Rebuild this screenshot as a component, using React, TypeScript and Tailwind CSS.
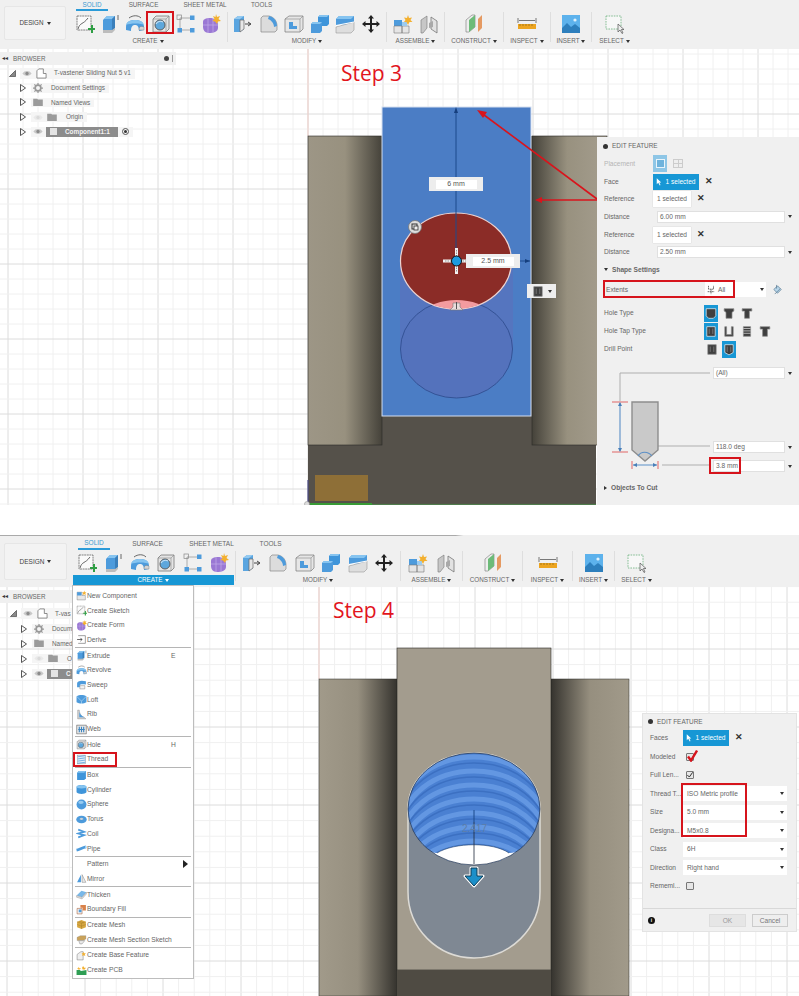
import React from 'react';
import clsx from 'clsx';

const FONT = 'font-["Liberation_Sans",Arial,sans-serif]';

const Svg = ({ children, className = 'h-5 w-5' }: { children: React.ReactNode; className?: string }) => (
  <svg viewBox="0 0 20 20" className={clsx('shrink-0', className)}>
    {children}
  </svg>
);

type IconProps = { className?: string };

const SketchIcon = ({ className }: IconProps) => (
  <Svg className={className}>
    <rect x="2" y="2" width="14" height="14" fill="#fafafa" stroke="#666" strokeWidth="0.8" strokeDasharray="2 .6" />
    <path d="M3 15 C5 8 8 11 13 4" fill="none" stroke="#555" strokeWidth="0.9" />
    <path d="M13 14 h3 v-3 h2 v3 h2 v2 h-2 v3 h-2 v-3 h-3z" fill="#2f9e44" />
  </Svg>
);
const ExtrudeIcon = ({ className }: IconProps) => (
  <Svg className={className}>
    <path d="M3 6 L7 2 H15 V14 L12 17 H3Z" fill="#4d9bdc" />
    <path d="M3 6 L7 2 H15 L12 5 H3Z" fill="#86c4f0" />
    <path d="M12 5 L15 2 V14 L12 17Z" fill="#3a7fbb" />
    <path d="M3 16 H12 L15 14 V16 L12 19 H3Z" fill="#bdbdbd" />
    <path d="M18 1 V6" stroke="#444" strokeWidth="0.8" />
  </Svg>
);
const RevolveIcon = ({ className }: IconProps) => (
  <Svg className={className}>
    <path d="M1 13 C1 7 6 6 10 6 C14 6 19 7 19 13 L19 16 L14 17 C14 12 12 11 10 11 C8 11 6 12 6 17 L1 16Z" fill="#4d9bdc" />
    <path d="M1 11 C2 7 6 6 10 6 C14 6 18 7 19 11 C16 9 5 9 1 11Z" fill="#86c4f0" />
    <path d="M4 4 C8 1 13 1 16 4" fill="none" stroke="#444" strokeWidth="0.8" />
    <path d="M14 16 C14 12 16 12 19 13 V16Z" fill="#d5d5d5" stroke="#777" strokeWidth="0.4" />
  </Svg>
);
const HoleIcon = ({ className }: IconProps) => (
  <Svg className={className}>
    <path d="M2 5 L5 2 H18 V15 L15 18 H2Z" fill="#e4e4e4" stroke="#777" strokeWidth="0.8" />
    <path d="M2 5 H15 V18 M15 5 L18 2" fill="none" stroke="#888" strokeWidth="0.6" />
    <circle cx="9" cy="11" r="5" fill="#5ea7dc" stroke="#555" strokeWidth="0.9" />
    <path d="M5 10 A5 5 0 0 1 12 8" fill="none" stroke="#c6e0f4" strokeWidth="1.1" />
  </Svg>
);
const PatternIcon = ({ className }: IconProps) => (
  <Svg className={className}>
    <path d="M4 4 H16 M4 4 V16 M4 16 H16" fill="none" stroke="#999" strokeWidth="0.8" />
    <rect x="1" y="1" width="4.5" height="4.5" fill="none" stroke="#888" strokeWidth="0.7" />
    <rect x="14" y="1.5" width="4.5" height="4.5" fill="#4d9bdc" />
    <rect x="1.5" y="14" width="4.5" height="4.5" fill="#4d9bdc" />
    <rect x="14" y="14" width="4.5" height="4.5" fill="#4d9bdc" />
  </Svg>
);
const FormIcon = ({ className }: IconProps) => (
  <Svg className={className}>
    <path d="M2 8 C2 5 5 4 9 4 C13 4 16 6 17 10 V14 C17 18 12 19 8 19 C4 19 2 16 2 13Z" fill="#9a78d4" />
    <path d="M7 4 V19 M2 11 H17 M12 5 V18" stroke="#c3aeea" strokeWidth="0.7" fill="none" />
    <path d="M15 0 L16 3 L19 2 L17.5 5 L20 7 L17 7.5 L16 10 L14 7.5 L11.5 7 L13.5 5 L12 2 L14.5 3Z" fill="#f3b02f" />
  </Svg>
);
const PressPullIcon = ({ className }: IconProps) => (
  <Svg className={className}>
    <path d="M1 5 L5 2 H11 V15 L7 18 H1Z" fill="#5aa5e0" />
    <path d="M7 6 H11 V15 L7 18Z" fill="#e7e7e7" stroke="#666" strokeWidth="0.7" />
    <path d="M1 5 L5 2 H11 L7 5Z" fill="#93c9f0" />
    <path d="M12 10 H17 M15 8 L18 10 L15 12" fill="none" stroke="#333" strokeWidth="0.9" />
  </Svg>
);
const FilletIcon = ({ className }: IconProps) => (
  <Svg className={className}>
    <path d="M2 4 L4 2 H10 C15 3 18 7 18 12 V16 L16 18 H2Z" fill="#dcdcdc" stroke="#888" strokeWidth="0.7" />
    <path d="M10 2 C15 3 18 7 18 12 L15 13 C15 9 12 6 9 5Z" fill="#4d9bdc" />
  </Svg>
);
const ShellIcon = ({ className }: IconProps) => (
  <Svg className={className}>
    <path d="M1 5 L5 2 H19 V15 L16 18 H1Z" fill="#e6e6e6" stroke="#777" strokeWidth="0.7" />
    <path d="M1 5 H16 V18 M16 5 L19 2" fill="none" stroke="#888" strokeWidth="0.6" />
    <path d="M5 8 H9 V12 H13 V15 H5Z" fill="#4d9bdc" />
  </Svg>
);
const CombineIcon = ({ className }: IconProps) => (
  <Svg className={className}>
    <path d="M8 3 L10 1 H19 V10 L17 12 H8Z" fill="#3f95da" />
    <path d="M8 3 L10 1 H19 L17 3Z" fill="#86c4f0" />
    <path d="M1 10 L3 8 H12 V17 L10 19 H1Z" fill="#4d9bdc" />
    <path d="M1 10 L3 8 H12 L10 10Z" fill="#86c4f0" />
  </Svg>
);
const SplitIcon = ({ className }: IconProps) => (
  <Svg className={className}>
    <path d="M1 5 L4 2 H19 V8 L16 11 H1Z" fill="#4d9bdc" />
    <path d="M1 5 L4 2 H19 L16 5Z" fill="#86c4f0" />
    <path d="M1 13 L19 8 V16 L16 19 H1Z" fill="#dedede" stroke="#888" strokeWidth="0.5" />
    <path d="M1 11.5 L19 8" stroke="#fff" strokeWidth="1.2" />
  </Svg>
);
const MoveIcon = ({ className }: IconProps) => (
  <Svg className={className}>
    <path d="M10 1 L13 4.5 H11 V9 H15.5 V7 L19 10 L15.5 13 V11 H11 V15.5 H13 L10 19 L7 15.5 H9 V11 H4.5 V13 L1 10 L4.5 7 V9 H9 V4.5 H7Z" fill="#222" />
  </Svg>
);
const AssembleIcon = ({ className }: IconProps) => (
  <Svg className={className}>
    <path d="M1 6 H9 V12 H1Z" fill="#4d9bdc" />
    <path d="M1 12 H9 V19 H1Z M9 12 H16 V19 H9Z" fill="#e5e5e5" stroke="#777" strokeWidth="0.6" />
    <path d="M9 8 H14 V12 H9Z" fill="#9ccbef" />
    <path d="M15 1 L16 4 L19 3.5 L17.5 6 L19.5 8 L16.5 8 L15 11 L13.5 8 L11 8 L12.5 6 L11 3.5 L14 4Z" fill="#f3b02f" />
  </Svg>
);
const JointIcon = ({ className }: IconProps) => (
  <Svg className={className}>
    <path d="M2 6 L8 2 V14 L4 19 H2Z" fill="#c7c7c7" stroke="#777" strokeWidth="0.6" />
    <path d="M12 3 L18 7 V19 L12 15Z" fill="#e2e2e2" stroke="#777" strokeWidth="0.8" />
    <path d="M10 9 L14 7 V13 L10 14Z" fill="#a9a9a9" />
  </Svg>
);
const ConstructIcon = ({ className }: IconProps) => (
  <Svg className={className}>
    <path d="M2 6 L8 1 H11 V13 L5 18 H2Z" fill="#eee" stroke="#777" strokeWidth="0.6" />
    <path d="M5 6 L11 1 V13 L5 18Z" fill="#6dbb79" />
    <path d="M14 5 L18 1 V14 L14 18Z" fill="#e59a62" />
  </Svg>
);
const InspectIcon = ({ className }: IconProps) => (
  <Svg className={className}>
    <rect x="1" y="10" width="18" height="5" fill="#eda520" />
    <path d="M1 4 V9 M19 4 V9 M2 6.5 H18" fill="none" stroke="#444" strokeWidth="0.7" />
    <path d="M3 10 V12 M6 10 V12 M9 10 V12 M12 10 V12 M15 10 V12" stroke="#7c5a10" strokeWidth="0.6" />
  </Svg>
);
const InsertIcon = ({ className }: IconProps) => (
  <Svg className={className}>
    <rect x="1" y="1" width="18" height="18" fill="#5db2ec" />
    <path d="M1 19 V14 L6 9 L10 13 L14 10 L19 14 V19Z" fill="#2d7fbd" />
    <circle cx="14" cy="6" r="1.6" fill="#dff1fc" />
  </Svg>
);
const SelectIcon = ({ className }: IconProps) => (
  <Svg className={className}>
    <rect x="1" y="2" width="15" height="13" fill="#f7f7f7" stroke="#6bb07c" strokeWidth="0.8" strokeDasharray="1.6 1" />
    <path d="M13 10 L13 18 L15 16 L17 19.5 L18 19 L16.4 15.5 L19 15.5Z" fill="#eee" stroke="#555" strokeWidth="0.7" />
  </Svg>
);

// small menu glyphs
const ComponentIcon = ({ className }: IconProps) => (
  <Svg className={className}>
    <path d="M2 4 H11 V10 H17 V18 H2Z" fill="#e7e7e7" stroke="#777" strokeWidth="0.8" />
    <path d="M2 4 H10 V10 H2Z" fill="#4d9bdc" />
    <path d="M15 1 L16 4 L19 4 L17 6 L18 9 L15 7.5 L12 9 L13 6 L11 4 L14 4Z" fill="#f3b02f" />
  </Svg>
);
const DeriveIcon = ({ className }: IconProps) => (
  <Svg className={className}>
    <path d="M4 3 H17 V17 H4" fill="#fff" stroke="#555" strokeWidth="1" />
    <path d="M2 10 H11 M8 7 L11 10 L8 13" fill="none" stroke="#333" strokeWidth="1.3" />
  </Svg>
);
const SweepIcon = ({ className }: IconProps) => (
  <Svg className={className}>
    <path d="M2 8 C2 3 10 2 18 4 V10 C12 9 8 9 7 11 V15 H2Z" fill="#4d9bdc" />
    <path d="M7 12 H16 V18 H7Z" fill="#f2f2f2" stroke="#666" strokeWidth="0.7" />
  </Svg>
);
const LoftIcon = ({ className }: IconProps) => (
  <Svg className={className}>
    <path d="M1 4 C6 1 14 1 19 4 V15 C14 18 6 18 1 15Z" fill="#4d9bdc" />
    <path d="M1 4 L10 13 L19 4 M10 13 V18" fill="none" stroke="#d8ecfa" strokeWidth="0.9" />
  </Svg>
);
const RibIcon = ({ className }: IconProps) => (
  <Svg className={className}>
    <path d="M3 2 V18 H18 L15 15 C10 14 6 8 6 2Z" fill="#cfcfcf" stroke="#777" strokeWidth="0.6" />
    <path d="M6 5 C7 9 10 13 15 15 H6Z" fill="#4d9bdc" />
  </Svg>
);
const WebIcon = ({ className }: IconProps) => (
  <Svg className={className}>
    <rect x="1.5" y="2" width="17" height="16" fill="#e7e7e7" stroke="#555" strokeWidth="1" />
    <path d="M6 5 V15 M10 5 V15 M14 5 V15 M4 10 H16" stroke="#3b84c0" strokeWidth="2" />
  </Svg>
);
const ThreadIcon = ({ className }: IconProps) => (
  <Svg className={className}>
    <rect x="3" y="2" width="14" height="16" fill="#e3eef8" stroke="#777" strokeWidth="0.7" />
    <path d="M3 5 L17 3 M3 9 L17 7 M3 13 L17 11 M3 17 L17 15" stroke="#4d9bdc" strokeWidth="1.3" />
  </Svg>
);
const BoxIcon = ({ className }: IconProps) => (
  <Svg className={className}>
    <path d="M2 5 L5 2 H18 V15 L15 18 H2Z" fill="#3f95da" />
    <path d="M2 5 L5 2 H18 L15 5Z" fill="#86c4f0" />
  </Svg>
);
const CylinderIcon = ({ className }: IconProps) => (
  <Svg className={className}>
    <path d="M1 5 C4 1 16 1 19 5 V15 C16 19 4 19 1 15Z" fill="#3f95da" />
    <ellipse cx="10" cy="5" rx="9" ry="3" fill="#86c4f0" />
  </Svg>
);
const SphereIcon = ({ className }: IconProps) => (
  <Svg className={className}>
    <circle cx="10" cy="10" r="9" fill="#4d9bdc" />
    <ellipse cx="9" cy="6" rx="5" ry="3" fill="#96cbf1" />
  </Svg>
);
const TorusIcon = ({ className }: IconProps) => (
  <Svg className={className}>
    <ellipse cx="10" cy="10" rx="9.5" ry="7" fill="#4d9bdc" />
    <ellipse cx="10" cy="9" rx="3.5" ry="2" fill="#dcdcdc" stroke="#3b7eb5" strokeWidth="0.5" />
  </Svg>
);
const CoilIcon = ({ className }: IconProps) => (
  <Svg className={className}>
    <path d="M4 3 L15 7 L4 10 L15 13 L4 17" fill="none" stroke="#4d9bdc" strokeWidth="3" />
  </Svg>
);
const PipeIcon = ({ className }: IconProps) => (
  <Svg className={className}>
    <path d="M1 13 C6 12 12 8 18 7" fill="none" stroke="#4d9bdc" strokeWidth="5" />
    <ellipse cx="18" cy="7.5" rx="1.5" ry="2.5" fill="#a5d3f4" />
  </Svg>
);
const MirrorIcon = ({ className }: IconProps) => (
  <Svg className={className}>
    <path d="M2 17 L9 3 V17Z" fill="#4d9bdc" />
    <path d="M11 3 L18 17 H11Z" fill="#e7e7e7" stroke="#777" strokeWidth="0.8" />
  </Svg>
);
const ThickenIcon = ({ className }: IconProps) => (
  <Svg className={className}>
    <path d="M1 12 L10 3 L19 6 L11 15Z" fill="#79b8e8" />
    <path d="M1 12 L11 15 L19 6 V9 L11 18 L1 15Z" fill="#dedede" stroke="#777" strokeWidth="0.6" />
  </Svg>
);
const BoundaryIcon = ({ className }: IconProps) => (
  <Svg className={className}>
    <path d="M2 8 H11 V18 H2Z" fill="#f3f3f3" stroke="#a65a32" strokeWidth="1" />
    <path d="M8 2 H18 V12 H12 V7 H8Z" fill="#d9824a" />
    <rect x="5" y="10" width="5" height="5" fill="#4d9bdc" />
  </Svg>
);
const MeshIcon = ({ className }: IconProps) => (
  <Svg className={className}>
    <path d="M2 5 L10 2 L18 5 V15 L10 18 L2 15Z" fill="#d7a741" />
    <path d="M2 5 L10 8 L18 5 M10 8 V18 M6 4 L14 7 M2 10 L10 13 L18 10" fill="none" stroke="#8f6c20" strokeWidth="0.6" />
  </Svg>
);
const SectionIcon = ({ className }: IconProps) => (
  <Svg className={className}>
    <path d="M2 6 L8 3 H18 V9 L13 12 H2Z" fill="#c9a25a" stroke="#777" strokeWidth="0.5" />
    <path d="M5 12 H16 L11 18 H7Z" fill="#eaeaea" stroke="#666" strokeWidth="0.7" />
  </Svg>
);
const BaseIcon = ({ className }: IconProps) => (
  <Svg className={className}>
    <path d="M2 8 L9 3 H13 V18 H2Z" fill="#efefef" stroke="#777" strokeWidth="0.9" />
    <path d="M14 3 L15 6 L18 6 L16 8 L17 11 L14 9.5 L11 11 L12 8 L10 6 L13 6Z" fill="#f3b02f" />
  </Svg>
);
const PcbIcon = ({ className }: IconProps) => (
  <Svg className={className}>
    <path d="M1 9 L7 9 L9 11 L19 9 V18 H1Z" fill="#2f9e54" />
    <path d="M5 3 L6 6 L9 6 L7 8 L4 8 L2 6 L4 6Z M13 2 L15 5 L18 5 L16 8 L12 8 L11 5Z" fill="#f3b02f" />
  </Svg>
);

type HoleKind = 'simple' | 'counter' | 'tap' | 'clearance' | 'threaded' | 'taper' | 'flat' | 'angled';

// The little hole section glyphs in the feature panel
const HoleGlyph = ({ kind, on }: { kind: HoleKind; on?: boolean }) => {
  const paths: Record<HoleKind, string> = {
    simple: 'M2 2 H18 V14 L14 18 H6 L2 14Z',
    counter: 'M2 2 H18 V6 H14 V18 H6 V6 H2Z',
    tap: 'M2 2 H18 V6 L15 8 V18 H5 V8 L2 6Z',
    clearance: 'M3 2 H17 V18 H3Z',
    threaded: 'M3 2 H6 V15 H14 V2 H17 V18 H3Z',
    taper: 'M4 2 H16 V18 H4Z',
    flat: 'M2 2 H18 V6 H14 V18 H6 V6 H2Z',
    angled: 'M3 2 H17 V15 L10 19 L3 15Z',
  };
  return (
    <span className={clsx('flex h-[17px] w-[14px] items-center justify-center', on && 'bg-[#1797d5]')}>
      <svg viewBox="0 0 20 20" className="h-[13px] w-[12px]">
        <path d={paths[kind]} fill="#3f3f3f" stroke={on ? '#e4f3fb' : '#8a8a8a'} strokeWidth="1.2" />
        {kind === 'taper' && <path d="M4 5 H16 M4 9 H16 M4 13 H16" stroke="#ddd" strokeWidth="1.2" />}
        {(kind === 'clearance' || kind === 'angled') && <path d="M7 5 V14 M13 5 V14" stroke="#9a9a9a" strokeWidth="1" />}
      </svg>
    </span>
  );
};

const Caret = ({ className = '' }: { className?: string }) => (
  <span className={clsx('inline-block h-0 w-0 border-x-[2px] border-t-[3px] border-x-transparent border-t-[#333]', className)} />
);

const Sep = ({ className }: { className: string }) => <div className={clsx('w-px bg-[#dedede]', className)} />;

const Group = ({
  label,
  icons,
  width,
  gap,
  iconsHeight,
  active,
  marked,
}: {
  label: string;
  icons: ((p: IconProps) => React.JSX.Element)[];
  width: string;
  gap: string;
  iconsHeight: string;
  active?: boolean;
  marked?: number;
}) => (
  <div className={clsx('flex shrink-0 flex-col items-center', width)}>
    <div className={clsx('flex items-center', iconsHeight, gap)}>
      {icons.map((Icon, i) => (
        <span key={i} className="relative block h-5 w-5">
          <Icon className="h-5 w-5" />
          {marked === i && <span className="absolute -left-[5px] -top-[3px] h-[23px] w-[28px] border-2 border-[#d6141c]" />}
        </span>
      ))}
    </div>
    <div
      className={clsx(
        'flex h-[10px] items-center justify-center gap-[2px] text-[6.3px]',
        active ? 'w-[161px] bg-[#1797d5] text-white' : 'text-[#666]',
      )}
    >
      {label}
      <Caret className={active ? 'border-t-white' : ''} />
    </div>
  </div>
);

const CREATE = [SketchIcon, ExtrudeIcon, RevolveIcon, HoleIcon, PatternIcon, FormIcon];
const MODIFY = [PressPullIcon, FilletIcon, ShellIcon, CombineIcon, SplitIcon, MoveIcon];
const ASSEMBLE = [AssembleIcon, JointIcon];

const TopBar = () => (
  <div className="flex h-[49px] bg-[#f0f0f0]">
    <div className="ml-1 mt-[6px] flex h-[34px] w-[62px] items-center justify-center gap-[3px] rounded-[2px] border border-[#e6e6e6] bg-[#f3f3f3] text-[6.3px] text-[#444]">
      DESIGN <Caret />
    </div>
    <div className="ml-[3px] flex flex-col">
      <div className="ml-[7px] flex h-[12px] whitespace-nowrap text-[6.3px] text-[#666]">
        <span className="flex h-[11px] w-[32px] items-center justify-center border-b-2 border-[#2b9bd8] text-[#3c9ad0]">SOLID</span>
        <span className="ml-[22px] flex h-[10px] w-[27px] items-center justify-center">SURFACE</span>
        <span className="ml-[28px] flex h-[10px] w-[40px] items-center justify-center">SHEET METAL</span>
        <span className="ml-[26px] flex h-[10px] w-[21px] items-center justify-center">TOOLS</span>
      </div>
      <div className="flex">
        <Group label="CREATE" icons={CREATE} width="w-[158px]" gap="gap-[5.2px]" iconsHeight="h-[24px]" marked={3} />
        <Sep className="h-[30px]" />
        <Group label="MODIFY" icons={MODIFY} width="w-[158px]" gap="gap-[5.6px]" iconsHeight="h-[24px]" />
        <Sep className="h-[30px]" />
        <Group label="ASSEMBLE" icons={ASSEMBLE} width="w-[57px]" gap="gap-[6px]" iconsHeight="h-[24px]" />
        <Sep className="h-[30px]" />
        <Group label="CONSTRUCT" icons={[ConstructIcon]} width="w-[58px]" gap="gap-0" iconsHeight="h-[24px]" />
        <Sep className="h-[30px]" />
        <Group label="INSPECT" icons={[InspectIcon]} width="w-[46px]" gap="gap-0" iconsHeight="h-[24px]" />
        <Sep className="h-[30px]" />
        <Group label="INSERT" icons={[InsertIcon]} width="w-[40px]" gap="gap-0" iconsHeight="h-[24px]" />
        <Sep className="h-[30px]" />
        <Group label="SELECT" icons={[SelectIcon]} width="w-[45px]" gap="gap-0" iconsHeight="h-[24px]" />
      </div>
    </div>
  </div>
);

const SecondBar = () => (
  <div className="flex h-[51px] bg-[#f0f0f0]">
    <div className="ml-1 mt-[7px] flex h-[37px] w-[63px] items-center justify-center gap-[3px] rounded-[2px] border border-[#e6e6e6] bg-[#f3f3f3] text-[6.5px] text-[#444]">
      DESIGN <Caret />
    </div>
    <div className="ml-[4px] flex flex-col">
      <div className="ml-[7px] flex h-[15px] whitespace-nowrap text-[6.5px] text-[#666]">
        <span className="flex h-[14px] w-[32px] items-center justify-center border-b-2 border-[#2b9bd8] pt-[2px] text-[#3c9ad0]">SOLID</span>
        <span className="ml-[23px] flex h-[15px] w-[29px] items-center justify-center">SURFACE</span>
        <span className="ml-[29px] flex h-[15px] w-[41px] items-center justify-center">SHEET METAL</span>
        <span className="ml-[28px] flex h-[15px] w-[21px] items-center justify-center">TOOLS</span>
      </div>
      <div className="flex">
        <Group label="CREATE" icons={CREATE} width="w-[164px]" gap="gap-[6.4px]" iconsHeight="h-[24px]" active />
        <Sep className="h-[30px]" />
        <Group label="MODIFY" icons={MODIFY} width="w-[164px]" gap="gap-[6.4px]" iconsHeight="h-[24px]" />
        <Sep className="h-[30px]" />
        <Group label="ASSEMBLE" icons={ASSEMBLE} width="w-[61px]" gap="gap-[8px]" iconsHeight="h-[24px]" />
        <Sep className="h-[30px]" />
        <Group label="CONSTRUCT" icons={[ConstructIcon]} width="w-[59px]" gap="gap-0" iconsHeight="h-[24px]" />
        <Sep className="h-[30px]" />
        <Group label="INSPECT" icons={[InspectIcon]} width="w-[49px]" gap="gap-0" iconsHeight="h-[24px]" />
        <Sep className="h-[30px]" />
        <Group label="INSERT" icons={[InsertIcon]} width="w-[41px]" gap="gap-0" iconsHeight="h-[24px]" />
        <Sep className="h-[30px]" />
        <Group label="SELECT" icons={[SelectIcon]} width="w-[43px]" gap="gap-0" iconsHeight="h-[24px]" />
      </div>
    </div>
  </div>
);

const GridLines = ({ x0, y0, step, major, w, h }: { x0: number; y0: number; step: number; major: number; w: number; h: number }) => {
  const xs = Array.from({ length: 60 }, (_, i) => x0 + i * step).filter((x) => x < w);
  const ys = Array.from({ length: 70 }, (_, i) => y0 + i * step).filter((y) => y < h);
  return (
    <g>
      {xs.map((x, i) => (
        <line key={x} x1={x} x2={x} y1="0" y2={h} stroke={i % major === 0 ? '#dcdcdc' : '#f0f0f0'} strokeWidth="1" />
      ))}
      {ys.map((y, i) => (
        <line key={y} x1="0" x2={w} y1={y} y2={y} stroke={i % major === 0 ? '#dcdcdc' : '#f0f0f0'} strokeWidth="1" />
      ))}
    </g>
  );
};

const SceneOne = () => (
  <svg viewBox="0 49 799 456" className="absolute inset-0 h-full w-full">
    <defs>
      <linearGradient id="s1l" x1="308" x2="382" y1="0" y2="0" gradientUnits="userSpaceOnUse">
        <stop offset="0" stopColor="#9d9686" />
        <stop offset="0.5" stopColor="#98917f" />
        <stop offset="1" stopColor="#45423a" />
      </linearGradient>
      <linearGradient id="s1r" x1="532" x2="596" y1="0" y2="0" gradientUnits="userSpaceOnUse">
        <stop offset="0" stopColor="#45423a" />
        <stop offset="0.55" stopColor="#98917f" />
        <stop offset="1" stopColor="#a19a8a" />
      </linearGradient>
      <clipPath id="s1c">
        <ellipse cx="456" cy="261" rx="55.5" ry="48" />
      </clipPath>
    </defs>
    <GridLines x0={8} y0={39} step={15} major={5} w={799} h={505} />
    <line x1="308" x2="308" y1="49" y2="136" stroke="#f0cfc9" />
    <rect x="308" y="136" width="288" height="369" fill="#55514a" />
    <rect x="308" y="136" width="74" height="309" fill="url(#s1l)" stroke="#2b2a26" strokeWidth="0.6" />
    <rect x="532" y="136" width="75" height="309" fill="url(#s1r)" stroke="#2b2a26" strokeWidth="0.6" />
    <rect x="315" y="475" width="53" height="26" fill="#8e6f37" />
    <line x1="310" x2="372" y1="504" y2="504" stroke="#2fb52f" strokeWidth="1.5" />
    <line x1="372" x2="596" y1="504.4" y2="504.4" stroke="#4f8f4f" strokeWidth="0.8" />
    <line x1="308" x2="308" y1="480" y2="503" stroke="#4b4b86" strokeWidth="1.2" />
    <circle cx="307" cy="504" r="2.5" fill="#ddd" stroke="#888" strokeWidth="0.5" />

    <rect x="382" y="107" width="149" height="309" fill="#4b7dc5" stroke="#d5dff0" strokeWidth="1" />
    <rect x="400" y="262" width="113" height="87" fill="#5575bf" />
    <ellipse cx="456.5" cy="349" rx="56" ry="49" fill="#5472bc" stroke="#2c4a8c" strokeWidth="0.8" />
    <ellipse cx="456" cy="261" rx="55.5" ry="48" fill="#8b2c27" stroke="#eed3d0" strokeWidth="1.2" />
    <g clipPath="url(#s1c)">
      <ellipse cx="456.5" cy="349" rx="56" ry="49" fill="#f39b9f" />
    </g>

    <line x1="456" x2="456" y1="110" y2="177" stroke="#1c4a8c" strokeWidth="1" />
    <line x1="456" x2="456" y1="191" y2="261" stroke="#1c4a8c" strokeWidth="1" />
    <path d="M456 107 L458 113 H454Z" fill="#163f7e" />
    <line x1="520" x2="530" y1="261" y2="261" stroke="#1c4a8c" strokeWidth="1" />
    <path d="M530 261 L525 259 V263Z" fill="#163f7e" />

    {/* centre gizmo */}
    <path d="M456.5 248 V274 M443 261 H470" stroke="#f3f3f3" strokeWidth="3" />
    <path d="M456.5 250 V272 M445 261 H468" stroke="#555" strokeWidth="0.6" strokeDasharray="1.5 1" />
    <circle cx="456.5" cy="261" r="5" fill="#1b9ae0" stroke="#111" strokeWidth="1" />
    <circle cx="415" cy="227" r="6.5" fill="#dedede" stroke="#777" strokeWidth="0.8" />
    <rect x="412" y="224" width="5" height="5" fill="none" stroke="#333" strokeWidth="1" />
    <rect x="414" y="226" width="4" height="4" fill="#eee" stroke="#333" strokeWidth="0.8" />
    <path d="M453 303 H460 V307 L463 310 H450 L453 307Z" fill="#e9dcdc" stroke="#777" strokeWidth="0.6" />
    <path d="M456.5 302 V309" stroke="#555" strokeWidth="1" />

    {/* annotation arrows */}
    <path d="M597 199 L480 112" stroke="#d9141c" strokeWidth="1.6" fill="none" />
    <path d="M477 110 L487 112 L483 118Z" fill="#d9141c" />
    <path d="M603 200 L540 200" stroke="#d9141c" strokeWidth="1.6" fill="none" />
    <path d="M535 200 L542 197 V203Z" fill="#d9141c" />
  </svg>
);

const SceneTwo = () => (
  <svg viewBox="0 587 799 409" className="absolute inset-0 h-full w-full">
    <defs>
      <linearGradient id="s2l" x1="319" x2="397" y1="0" y2="0" gradientUnits="userSpaceOnUse">
        <stop offset="0" stopColor="#a19a8a" />
        <stop offset="0.5" stopColor="#968f7f" />
        <stop offset="1" stopColor="#35332e" />
      </linearGradient>
      <linearGradient id="s2r" x1="551" x2="629" y1="0" y2="0" gradientUnits="userSpaceOnUse">
        <stop offset="0" stopColor="#35332e" />
        <stop offset="0.5" stopColor="#968f7f" />
        <stop offset="1" stopColor="#a19a8a" />
      </linearGradient>
      <clipPath id="s2c">
        <ellipse cx="474" cy="809" rx="66" ry="56" />
      </clipPath>
    </defs>
    <GridLines x0={7} y0={25} step={15.6} major={5} w={799} h={996} />
    <line x1="319" x2="319" y1="587" y2="679" stroke="#f0cfc9" />
    <rect x="319" y="679" width="78" height="317" fill="url(#s2l)" stroke="#2b2a26" strokeWidth="0.5" />
    <rect x="551" y="679" width="78" height="317" fill="url(#s2r)" stroke="#2b2a26" strokeWidth="0.5" />
    <rect x="397" y="648" width="154" height="322" fill="#a39c8e" stroke="#2b2a26" strokeWidth="0.6" />
    <rect x="397" y="970" width="154" height="26" fill="#4f4b43" />

    <path d="M408 809 A66 56 0 1 1 540 809 V892 A66 66 0 0 1 408 892 Z" fill="#7f8893" stroke="#dddbd6" strokeWidth="1.5" />
    <g clipPath="url(#s2c)">
      <rect x="408" y="750" width="132" height="120" fill="#4a80d2" />
      {[757, 771, 785, 799, 813, 827, 841, 855].map((t) => (
        <ellipse key={t} cx="474" cy={t + 56} rx="72" ry="56" fill="none" stroke="#6397e2" strokeWidth="5" />
      ))}
      {[763, 777, 791, 805, 819, 833, 847].map((t) => (
        <ellipse key={t} cx="474" cy={t + 56} rx="72" ry="56" fill="none" stroke="#3c70c2" strokeWidth="1.6" />
      ))}
      <path d="M408 870 V850 L437 853 C455 842 493 842 509 853 L540 850 V870Z" fill="#ffffff" />
      <path d="M437 853 C455 842 493 842 509 853" fill="none" stroke="#1d3a66" strokeWidth="0.6" />
    </g>
    <ellipse cx="474" cy="809" rx="66" ry="56" fill="none" stroke="#24324a" strokeWidth="0.7" />
    <line x1="474" x2="474" y1="810" y2="822" stroke="#1c4a8c" strokeWidth="1" />
    <line x1="474" x2="474" y1="822" y2="864" stroke="#1f2a3a" strokeWidth="0.8" />
    <path d="M471 868 H477 V876 H483 L474 886 L465 876 H471Z" fill="#1b8fc9" stroke="#fff" strokeWidth="3" strokeLinejoin="round" />
    <path d="M471 868 H477 V876 H483 L474 886 L465 876 H471Z" fill="#1b8fc9" stroke="#0c3a55" strokeWidth="1" strokeLinejoin="round" />
  </svg>
);

const Expand = () => (
  <svg viewBox="0 0 6 8" className="h-[8px] w-[6px]">
    <path d="M0.5 0.5 L5.5 4 L0.5 7.5Z" fill="#fafafa" stroke="#444" strokeWidth="0.9" />
  </svg>
);

const TreeRow = ({ height, children }: { height: string; children: React.ReactNode }) => (
  <div className={clsx('flex items-center', height)}>
    <div className="flex w-[26px] shrink-0 justify-end">
      <Expand />
    </div>
    <div className="ml-[5px] flex items-center gap-[4px] bg-[#f5f5f5] pl-[2px] pr-[4px]">{children}</div>
  </div>
);

const Eye = ({ faint }: { faint?: boolean }) => (
  <svg viewBox="0 0 12 8" className={clsx('h-[7px] w-[10px] shrink-0', faint && 'opacity-25')}>
    <path d="M0.5 4 C3 0 9 0 11.5 4 C9 8 3 8 0.5 4Z" fill="#c8c8c8" />
    <circle cx="6" cy="4" r="2" fill="#8b8b8b" />
  </svg>
);
const Folder = () => (
  <svg viewBox="0 0 12 10" className="h-[8px] w-[10px] shrink-0">
    <path d="M0 1 H5 L6 2 H12 V10 H0Z" fill="#9b9b9b" />
  </svg>
);
const Gear = () => (
  <svg viewBox="0 0 12 12" className="h-[10px] w-[10px] shrink-0">
    <circle cx="6" cy="6" r="3.4" fill="none" stroke="#999" strokeWidth="2" />
    <path d="M6 0 V2.5 M6 9.5 V12 M0 6 H2.5 M9.5 6 H12 M1.7 1.7 L3.4 3.4 M8.6 8.6 L10.3 10.3 M1.7 10.3 L3.4 8.6 M8.6 3.4 L10.3 1.7" stroke="#999" strokeWidth="1.5" />
  </svg>
);
const Doc = () => (
  <svg viewBox="0 0 12 12" className="h-[11px] w-[11px] shrink-0">
    <path d="M1 3 L3 1 H8 V6 H11 V11 H1Z" fill="#fff" stroke="#777" strokeWidth="0.9" />
  </svg>
);

// second shot: the CREATE menu hides most of the tree, only the start of each name shows
const Browser = ({ second }: { second?: boolean }) => {
  const height = second ? 'h-[15px]' : 'h-[14.6px]';
  return (
    <div className={clsx('absolute left-0 top-[3px] overflow-hidden', second ? 'w-[72px]' : 'w-[178px]')}>
      <div className="flex h-[13px] w-[176px] items-center bg-[#f0f0f0] pl-[2px] pr-[3px] text-[6.3px] text-[#666]">
        <span className="mr-[5px] text-[6px] text-[#333]">◂◂</span>
        BROWSER
        <span className="ml-auto mr-[3px] h-[5px] w-[5px] rounded-full bg-[#444]" />
        <span className="h-[7px] w-px bg-[#999]" />
      </div>
      <div className={clsx('w-[176px] text-[6.4px] text-[#666]', second ? 'mt-[3px] pl-[1px]' : 'mt-[1px]')}>
        <div className={clsx('flex items-center pl-[9px]', height)}>
          <svg viewBox="0 0 8 8" className="mr-[4px] h-[7px] w-[7px] shrink-0">
            <path d="M7.5 0.5 V7.5 H0.5Z" fill="#8a8a8a" stroke="#333" strokeWidth="0.7" />
          </svg>
          <div className="flex items-center gap-[4px] bg-[#f5f5f5] pl-[2px] pr-[4px]">
            <Eye />
            <Doc />
            <span className="ml-[3px] whitespace-nowrap">{second ? 'T-vas' : 'T-vastener Sliding Nut 5 v1'}</span>
          </div>
        </div>
        <TreeRow height={height}>
          <Gear />
          <span className="ml-[4px] whitespace-nowrap">{second ? 'Docum' : 'Document Settings'}</span>
        </TreeRow>
        <TreeRow height={height}>
          <Folder />
          <span className="ml-[4px] whitespace-nowrap">{second ? 'Named' : 'Named Views'}</span>
        </TreeRow>
        <TreeRow height={height}>
          <Eye faint />
          <Folder />
          <span className="ml-[5px] whitespace-nowrap">{second ? 'O' : 'Origin'}</span>
        </TreeRow>
        <TreeRow height={height}>
          <Eye />
          <span className="-ml-[1px] flex h-[10px] w-[72px] items-center gap-[8px] whitespace-nowrap bg-[#8c8c8c] pl-[4px] font-bold text-[#f4f4f4]">
            <span className="h-[7px] w-[7px] shrink-0 bg-[#e4e4e4]" />
            {second ? 'C' : 'Component1:1'}
          </span>
          <span className="flex h-[7px] w-[7px] items-center justify-center rounded-full border border-[#555]">
            <span className="h-[3px] w-[3px] rounded-full bg-[#333]" />
          </span>
        </TreeRow>
      </div>
    </div>
  );
};

const Chip = () => (
  <div className="flex h-[16px] w-[46px] items-center justify-center gap-[3px] bg-[#1797d5] text-white">
    <svg viewBox="0 0 8 10" className="h-[8px] w-[6px]">
      <path d="M1 0 V8 L3 6 L5 9.5 L6 9 L4.4 5.5 L7 5.5Z" fill="#fff" />
    </svg>
    1 selected
  </div>
);

const Cross = () => <span className="text-[9px] font-bold leading-none text-[#333]">✕</span>;

const WhiteChip = () => (
  <div className="flex h-[16px] w-[38px] items-center justify-center bg-white text-[#666] shadow-[0_0_1px_#bbb]">1 selected</div>
);

const Input = ({ value, className }: { value: string; className: string }) => (
  <div className={clsx('flex h-[12px] items-center border border-[#e0e0e0] bg-white pl-[2px] text-[#666]', className)}>{value}</div>
);

const Row = ({ label, children, className = 'h-[17.7px]', dim }: { label: string; children?: React.ReactNode; className?: string; dim?: boolean }) => (
  <div className={clsx('flex items-center', className)}>
    <span className={clsx('w-[49px] shrink-0 whitespace-nowrap', dim && 'text-[#b5b5b5]')}>{label}</span>
    {children}
  </div>
);

const Tri = () => <Caret className="ml-[3px] shrink-0" />;

const FeaturePanelOne = () => (
  <div className="absolute left-[597px] top-[88px] h-[368px] w-[202px] bg-[#f0f0f0] px-[7px] text-[6.6px] text-[#666]">
    <div className="-mx-[1px] flex h-[18px] items-center gap-[4px] text-[6.4px]">
      <span className="h-[5px] w-[5px] rounded-full bg-[#333]" />
      EDIT FEATURE
    </div>
    <Row label="Placement" dim>
      <span className="flex h-[17px] w-[14px] items-center justify-center bg-[#8ec6e6]">
        <span className="h-[9px] w-[9px] border border-[#e8f4fb] bg-[#6fb3dc]" />
      </span>
      <span className="ml-[6px] grid h-[9px] w-[10px] grid-cols-2 gap-px border border-[#ccc] bg-[#ccc]">
        <span className="bg-[#eee]" />
        <span className="bg-[#eee]" />
        <span className="bg-[#eee]" />
        <span className="bg-[#eee]" />
      </span>
    </Row>
    <Row label="Face">
      <Chip />
      <span className="ml-[6px]">
        <Cross />
      </span>
    </Row>
    <Row label="Reference">
      <WhiteChip />
      <span className="ml-[6px]">
        <Cross />
      </span>
    </Row>
    <Row label="Distance">
      <Input value="6.00 mm" className="ml-[4px] w-[131px]" />
      <Tri />
    </Row>
    <Row label="Reference">
      <WhiteChip />
      <span className="ml-[6px]">
        <Cross />
      </span>
    </Row>
    <Row label="Distance">
      <Input value="2.50 mm" className="ml-[4px] w-[131px]" />
      <Tri />
    </Row>
    <div className="flex h-[17px] items-center gap-[4px] font-bold">
      <Caret className="border-x-[2.5px] border-t-[3.5px]" />
      Shape Settings
    </div>
    <div className="relative mt-[3px] flex h-[17px] items-center">
      <span className="ml-[2px] w-[99px]">Extents</span>
      <div className="flex h-[15px] w-[61px] items-center gap-[2px] bg-white pl-[1px]">
        <svg viewBox="0 0 12 12" className="h-[10px] w-[10px]">
          <path d="M3 1 V5 H9 V1 M6 5 V11 M2 8 H10" fill="none" stroke="#555" strokeWidth="1" strokeDasharray="2 .6" />
        </svg>
        All
        <Caret className="ml-auto mr-[2px]" />
      </div>
      <svg viewBox="0 0 12 12" className="ml-[6px] h-[11px] w-[11px]">
        <path d="M2 6 L6 2 L10 6 L6 10Z" fill="#b8d6ea" stroke="#5b7c93" strokeWidth="0.8" />
        <path d="M5 1 V5 M3 11 L9 5" stroke="#5b7c93" strokeWidth="0.8" />
      </svg>
      <span className="absolute -left-px -top-px h-[18px] w-[132px] border-2 border-[#d6141c]" />
    </div>
    <div className="mt-[6px]">
      <Row label="Hole Type" className="h-[18px]">
        <span className="flex items-center gap-[4px] pl-[51px]">
          <HoleGlyph kind="simple" on />
          <HoleGlyph kind="tap" />
          <HoleGlyph kind="flat" />
        </span>
      </Row>
      <Row label="Hole Tap Type" className="h-[18px]">
        <span className="flex items-center gap-[4px] pl-[51px]">
          <HoleGlyph kind="clearance" on />
          <HoleGlyph kind="threaded" />
          <HoleGlyph kind="taper" />
          <HoleGlyph kind="counter" />
        </span>
      </Row>
      <Row label="Drill Point" className="h-[18px]">
        <span className="flex items-center gap-[3px] pl-[52px]">
          <HoleGlyph kind="clearance" />
          <HoleGlyph kind="angled" on />
        </span>
      </Row>
    </div>
    <div className="flex h-[118px]">
      <svg viewBox="604 358 109 118" className="h-[118px] w-[109px] shrink-0">
        <path d="M710 373 H620 V401 M650 450 C651 447 652 446 656 446 H710 M662 465 H710" fill="none" stroke="#aeaeae" strokeWidth="1" />
        <path d="M612 402 H628 M612 452 H628 M632 461 V469 M658 461 V469" stroke="#e06666" strokeWidth="1" />
        <path d="M620 403 V451 M633 465 H657" stroke="#5b8fc7" strokeWidth="1.1" />
        <path d="M620 402 L618 406 H622Z M620 452 L618 448 H622Z M633 465 L637 463 V467Z M657 465 L653 463 V467Z" fill="#4a7fb8" />
        <path d="M632 402 H658 V450 L645 461 L632 450Z" fill="#c9c9c9" stroke="#8d8d8d" strokeWidth="1.4" />
        <path d="M638 456 C641 451 648 451 652 456" fill="none" stroke="#5b8fc7" strokeWidth="1.1" />
      </svg>
      <div className="flex flex-col pt-[9px]">
        <div className="flex items-center">
          <Input value="(All)" className="w-[72px]" />
          <Tri />
        </div>
        <div className="mt-[62px] flex items-center">
          <Input value="118.0 deg" className="w-[72px]" />
          <Tri />
        </div>
        <div className="relative mt-[7px] flex items-center">
          <Input value="3.8 mm" className="w-[72px]" />
          <Tri />
          <span className="absolute -left-[4px] -top-[3px] h-[17px] w-[32px] border-2 border-[#d6141c]" />
        </div>
      </div>
    </div>
    <div className="mt-[4px] flex h-[16px] items-center gap-[4px] font-bold">
      <span className="h-0 w-0 border-y-[2.5px] border-l-[3.5px] border-y-transparent border-l-[#333]" />
      Objects To Cut
    </div>
  </div>
);

const Select = ({ value }: { value: string }) => (
  <div className="flex h-[15px] w-[104px] items-center bg-white pl-[4px] pr-[3px] text-[#666]">
    {value}
    <Caret className="ml-auto" />
  </div>
);

const Check = ({ mark }: { mark?: 'red' | 'gray' }) => (
  <span className="relative ml-[3px] block h-[8px] w-[8px] rounded-[1px] border border-[#777] bg-[#e6e6e6]">
    {mark && (
      <svg viewBox="0 0 12 12" className={clsx('absolute', mark === 'red' ? '-left-[1px] -top-[5px] h-[13px] w-[12px]' : '-left-px -top-px h-[8px] w-[8px]')}>
        <path
          d={mark === 'red' ? 'M2 7 L5 11 L11 1' : 'M2 6 L5 9 L10 2'}
          fill="none"
          stroke={mark === 'red' ? '#d6141c' : '#333'}
          strokeWidth={mark === 'red' ? 2.4 : 1.5}
        />
      </svg>
    )}
  </span>
);

const Row2 = ({ label, children }: { label: string; children: React.ReactNode }) => (
  <div className="flex h-[18.5px] items-center">
    <span className="w-[33px] shrink-0 whitespace-nowrap">{label}</span>
    {children}
  </div>
);

const FeaturePanelTwo = () => (
  <div className="absolute left-[642px] top-[126px] h-[219px] w-[155px] border border-[#e3e3e3] bg-[#f0f0f0] text-[6.6px] text-[#666]">
    <div className="flex h-[15px] items-center gap-[4px] pl-[5px] text-[6.4px]">
      <span className="h-[5px] w-[5px] rounded-full bg-[#333]" />
      EDIT FEATURE
    </div>
    <div className="relative px-[7px]">
      <Row2 label="Faces">
        <Chip />
        <span className="ml-[6px]">
          <Cross />
        </span>
      </Row2>
      <Row2 label="Modeled">
        <Check mark="red" />
      </Row2>
      <Row2 label="Full Len...">
        <Check mark="gray" />
      </Row2>
      <Row2 label="Thread T...">
        <Select value="ISO Metric profile" />
      </Row2>
      <Row2 label="Size">
        <Select value="5.0 mm" />
      </Row2>
      <Row2 label="Designa...">
        <Select value="M5x0.8" />
      </Row2>
      <Row2 label="Class">
        <Select value="6H" />
      </Row2>
      <Row2 label="Direction">
        <Select value="Right hand" />
      </Row2>
      <Row2 label="Rememl...">
        <Check />
      </Row2>
      <span className="absolute left-[38px] top-[54px] h-[54px] w-[66px] border-2 border-[#d6141c]" />
    </div>
    <div className="mt-[12px] flex h-[25px] items-center border-t border-[#d8d8d8] px-[5px]">
      <span className="flex h-[7px] w-[7px] items-center justify-center rounded-full bg-[#111] text-[5px] font-bold leading-none text-white">i</span>
      <span className="ml-auto flex h-[13px] w-[37px] items-center justify-center border border-[#ddd] bg-[#e6e6e6] text-[#999]">OK</span>
      <span className="ml-[6px] mr-[3px] flex h-[13px] w-[36px] items-center justify-center border border-[#ccc] bg-[#eee] text-[#777]">Cancel</span>
    </div>
  </div>
);

type MenuEntry = { label: string; icon?: (p: IconProps) => React.JSX.Element; key?: string; more?: boolean; sep?: boolean; mark?: boolean };

const MENU: MenuEntry[] = [
  { label: 'New Component', icon: ComponentIcon },
  { label: 'Create Sketch', icon: SketchIcon },
  { label: 'Create Form', icon: FormIcon },
  { label: 'Derive', icon: DeriveIcon, sep: true },
  { label: 'Extrude', icon: ExtrudeIcon, key: 'E' },
  { label: 'Revolve', icon: RevolveIcon },
  { label: 'Sweep', icon: SweepIcon },
  { label: 'Loft', icon: LoftIcon },
  { label: 'Rib', icon: RibIcon },
  { label: 'Web', icon: WebIcon, sep: true },
  { label: 'Hole', icon: HoleIcon, key: 'H' },
  { label: 'Thread', icon: ThreadIcon, mark: true, sep: true },
  { label: 'Box', icon: BoxIcon },
  { label: 'Cylinder', icon: CylinderIcon },
  { label: 'Sphere', icon: SphereIcon },
  { label: 'Torus', icon: TorusIcon },
  { label: 'Coil', icon: CoilIcon },
  { label: 'Pipe', icon: PipeIcon, sep: true },
  { label: 'Pattern', more: true },
  { label: 'Mirror', icon: MirrorIcon, sep: true },
  { label: 'Thicken', icon: ThickenIcon },
  { label: 'Boundary Fill', icon: BoundaryIcon, sep: true },
  { label: 'Create Mesh', icon: MeshIcon },
  { label: 'Create Mesh Section Sketch', icon: SectionIcon, sep: true },
  { label: 'Create Base Feature', icon: BaseIcon },
  { label: 'Create PCB', icon: PcbIcon },
];

const CreateMenu = () => (
  <div className="absolute left-[72px] top-[-2px] w-[122px] border border-[#bdbdbd] bg-white pb-[1px] pt-[2.5px] text-[6.7px] text-[#666]">
    {MENU.map((m) => (
      <React.Fragment key={m.label}>
        <div className="relative flex h-[14.7px] items-center pl-[2px] pr-[5px]">
          <span className="flex w-[12px] shrink-0 justify-center">{m.icon && <m.icon className="h-[11px] w-[11px]" />}</span>
          <span className="whitespace-nowrap">{m.label}</span>
          {m.key && <span className="absolute left-[98px]">{m.key}</span>}
          {m.more && <span className="ml-auto h-0 w-0 border-y-[4px] border-l-[5px] border-y-transparent border-l-[#222]" />}
          {m.mark && <span className="absolute left-0 top-0 h-[15px] w-[44px] border-2 border-[#d6141c]" />}
        </div>
        {m.sep && <div className="mx-[2px] h-px bg-[#b5b5b5]" />}
      </React.Fragment>
    ))}
  </div>
);

const DimLabel = ({ value, className }: { value: string; className: string }) => (
  <div className={clsx('absolute flex h-[14px] w-[54px] items-center justify-center bg-[#ededed] text-[7px] text-[#555]', className)}>
    <span className="flex h-[9px] w-[41px] items-center justify-center bg-white">{value}</span>
  </div>
);

export default function App() {
  return (
    <div className={clsx('h-[996px] w-[799px] overflow-hidden bg-white', FONT)}>
      <TopBar />
      <div className="relative h-[456px]">
        <SceneOne />
        <Browser />
        <div className='absolute left-[341px] top-[9px] font-["Open_Sans",sans-serif] text-[21px] leading-[30px] text-[#e2141c]'>Step 3</div>
        <DimLabel value="6 mm" className="left-[429px] top-[128px]" />
        <DimLabel value="2.5 mm" className="left-[466px] top-[205px]" />
        <div className="absolute left-[527px] top-[235px] flex h-[14px] w-[29px] items-center justify-center gap-[3px] bg-[#eeeeee]">
          <HoleGlyph kind="clearance" />
          <Caret />
        </div>
        <FeaturePanelOne />
      </div>
      <div className="h-[30px]" />
      <div className="border-t border-[#b5b5b5] [border-image:linear-gradient(to_right,#aaa_57%,#f0f0f0_58%)_1]">
        <SecondBar />
      </div>
      <div className="relative h-[409px]">
        <SceneTwo />
        <Browser second />
        <CreateMenu />
        <div className='absolute left-[333px] top-[8px] font-["Open_Sans",sans-serif] text-[21px] leading-[30px] text-[#e2141c]'>Step 4</div>
        <div className="absolute left-[462px] top-[237px] text-[10px] leading-none text-[#5e7ea8]">2.417</div>
        <FeaturePanelTwo />
      </div>
    </div>
  );
}
